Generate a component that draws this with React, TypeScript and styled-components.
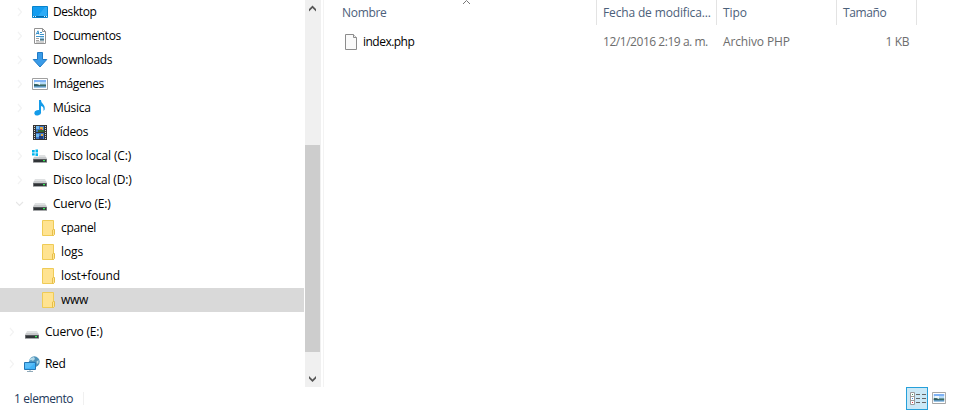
import React from "react";
import styled, { createGlobalStyle } from "styled-components";

const GlobalStyle = createGlobalStyle`
  * { box-sizing: border-box; }
  body { margin: 0; background: #fff; overflow: hidden; }
`;

const Window = styled.div`
  width: 954px;
  height: 410px;
  display: flex;
  flex-direction: column;
  background: #fff;
  color: #000;
  font: 12px/24px "Open Sans", "Noto Sans", sans-serif;
  white-space: nowrap;
`;
const Body = styled.div`
  display: flex;
  height: 387px;
`;
const Tree = styled.nav`
  width: 304px;
`;
const TreeRow = styled.div<{ $indent: number; $selected?: boolean; $gap?: boolean }>`
  display: flex;
  align-items: center;
  height: 24px;
  margin-top: ${(p) => (p.$gap ? 8 : 0)}px;
  padding-left: ${(p) => p.$indent}px;
  background: ${(p) => (p.$selected ? "#d9d9d9" : "transparent")};
`;
const Expander = styled.span`
  display: flex;
  width: 16px;
  height: 16px;
`;
const IconBox = styled.span<{ $gap?: number }>`
  display: flex;
  width: 16px;
  height: 16px;
  margin-right: ${(p) => p.$gap ?? 5}px;
`;
const Label = styled.span<{ $track?: number }>`
  letter-spacing: ${(p) => p.$track ?? -0.3}px;
`;
const ScrollBar = styled.div`
  display: flex;
  flex-direction: column;
  width: 16px;
  margin-left: 1px;
  background: #f0f0f0;
`;
const ScrollSpace = styled.div<{ $height: number }>`
  height: ${(p) => p.$height}px;
  display: flex;
`;
const ScrollThumb = styled.div`
  width: 15px;
  height: 207px;
  background: #cdcdcd;
`;
const Files = styled.main`
  margin-left: 2px;
  flex: 1;
  border-left: 1px solid #f3f3f3;
`;
const HeaderRow = styled.div`
  display: flex;
  height: 25px;
  padding-left: 12px;
  color: #4c607a;
`;
const HeaderCell = styled.div<{ $width: number }>`
  display: grid;
  width: ${(p) => p.$width}px;
  padding-left: 6px;
  border-right: 1px solid #e3e3e3;
  line-height: 26px;
  > * { grid-area: 1 / 1; }
  > svg { margin-left: 120px; }
`;
const FileRow = styled.div`
  display: flex;
  height: 24px;
  margin-top: 5px;
  padding-left: 19px;
  color: #6d6d6d;
  align-items: center;
`;
const FileCell = styled.div<{ $width: number; $right?: boolean; $dark?: boolean }>`
  display: flex;
  align-items: center;
  width: ${(p) => p.$width}px;
  justify-content: ${(p) => (p.$right ? "flex-end" : "flex-start")};
  color: ${(p) => (p.$dark ? "#000" : "inherit")};
`;
const StatusBar = styled.footer`
  display: flex;
  height: 23px;
  padding: 0 8px 0 14px;
  color: #1e395b;
`;
const StatusText = styled.div`
  width: 70px;
  height: 13px;
  margin-top: 5px;
  line-height: 13px;
  border-right: 1px solid #f0f0f0;
`;
const ViewButtons = styled.div`
  display: flex;
  margin-left: auto;
  align-items: center;
  gap: 4px;
`;
const ThumbnailButton = styled.button`
  display: flex;
  width: 14px;
  height: 16px;
  margin-bottom: 2px;
  padding: 0;
  border: 0;
  background: none;
`;
const ViewButton = styled.button`
  display: flex;
  width: 22px;
  height: 23px;
  padding: 0;
  border: 1px solid #26a0da;
  background: #cbe8f6;
`;

type IconName = "desktop" | "document" | "download" | "picture" | "music" | "video" | "system" | "drive" | "folder" | "network" | "file";

const Picture = () => (
  <>
    <path fill="#fff" stroke="#a0a0a0" d="M.5 2.5h15v11H.5z" />
    <path fill="#7fb2f5" d="M2 4h12v2H2z" />
    <path fill="#b5daf8" d="M2 6h12v2H2z" />
    <path fill="#eef8fb" d="M3 6h5v2H3z" />
    <path fill="#3d6a66" d="M2 8h3l3 1h6v1H2z" />
    <path fill="#6f9a9d" d="M8 8h6v1H8z" />
    <path fill="#2c5a68" d="M2 9h5v1H2z" />
    <path fill="#5c94b8" d="M2 10h12v1H2z" />
    <path fill="#9cc4e4" d="M2 11h12v1H2z" />
  </>
);
const Drive = () => (
  <>
    <path fill="#dfe1e2" d="M3 7h10l2 4H1z" />
    <path fill="#c7c9cb" d="M2 9h12l1 2H1z" />
    <path fill="#6c6f72" d="M1 11h14v3.6H1z" />
    <path fill="#303437" d="M2 11.6h12V14H2z" />
    <path fill="#35ed56" d="M11 12h2v1.3h-2z" />
  </>
);

function Icon({ name }: { name: IconName }) {
  return (
    <svg width="16" height="16" viewBox="0 0 16 16" fill="none">
      {name === "desktop" && (
        <>
          <path fill="#149df0" stroke="#0783cc" d="M.5 2.5h15v11H.5z" />
          <path fill="#45bafc" d="M13 3h2v9H6z" opacity=".5" />
          <path fill="#0869a8" d="M1 12h14v1H1z" />
          <path stroke="#d4f2ff" d="M1 12.5h1M3 12.5h1M12 12.5h1M14 12.5h1" />
        </>
      )}
      {name === "document" && (
        <>
          <path fill="#fff" stroke="#929292" d="M2.5.5h8l3 3v12h-11z" />
          <path stroke="#929292" d="M10.5.5v3h3" />
          <path stroke="#2587c5" strokeWidth=".9" d="M4 6.5 6 2.8l1 3.7M5 5.5h2M8 4.5h2M8 6.5h4M4 8.5h8" />
          <path stroke="#8a8a8a" d="M4 10.5h3M4 12.5h3M4 14h8" strokeWidth=".8" />
          <path fill="#83bbe0" d="M8 9.5h4v3H8z" />
          <path fill="#54757d" d="M8 11h4v1.5H8z" />
        </>
      )}
      {name === "download" && <path fill="#399be8" stroke="#207bc6" d="M5.5.5h5v7h4.3L8 15 1.2 7.5h4.3z" />}
      {name === "picture" && <Picture />}
      {name === "music" && (
        <>
          <path fill="#149be9" d="M7 0h2c0 4 4.5 4.2 3.7 9.5L11.5 11c.5-3.7-.8-4.6-2.5-5v6.3H7z" />
          <ellipse cx="5.7" cy="12.8" rx="3.4" ry="2.6" transform="rotate(-20 5.7 12.8)" fill="#149be9" />
        </>
      )}
      {name === "video" && (
        <>
          <path fill="#343434" d="M1 1h14v15H1z" />
          <path fill="#3f78c7" d="M4 2h8v6H4zM4 9h8v6H4z" />
          <path fill="#70b9ee" d="M4 2h3v3H4zM4 10h3v3H4z" />
          <path fill="#e2a942" d="M8 3h3v3H8zM9 10h2v2H9z" />
          <path fill="#b43e43" d="M8 5h2v2H8z" />
          <path fill="#33672f" d="M6 6h6v2H6z" />
          <path fill="#233e7b" d="M7 12h4v3H7z" />
          <path stroke="#d6d6d6" strokeDasharray="1 1" d="M2.5 2v13M13.5 2v13" />
        </>
      )}
      {name === "drive" && <Drive />}
      {name === "system" && (
        <>
          <Drive />
          <path fill="#fff" d="M0 1h7v7.5H0z" />
          <path fill="#00b5ee" d="M0 2h2.7v2.4H0zM3.5 1.6H6v2.8H3.5zM0 5.2h2.7v2.3H0zM3.5 5.2H6V8H3.5z" />
        </>
      )}
      {name === "folder" && (
        <>
          <path fill="#ffe391" stroke="#efcb56" d="M2.5.5h11v15h-11z" />
          <path fill="#ffe694" stroke="#e6be4a" d="M12.5 15.5V10l1-.5h1v5l-1 1z" />
        </>
      )}
      {name === "file" && (
        <>
          <path fill="#fafafa" stroke="#8c8c8c" d="M2.5.5h8l3 3v12h-11z" />
          <path fill="#eee" stroke="#8c8c8c" d="M10.5.5v3h3" />
        </>
      )}
      {name === "network" && (
        <>
          <circle cx="10.3" cy="5.7" r="5.4" fill="#4f93ba" />
          <path fill="#b4d9e8" d="M7 2l3-1 1 2-2 2-2-1-2 1V3.500zM12.500 5.500l2-1.500v3l-1.500 1z" />
          <path fill="#40b3f8" stroke="#2476b4" d="M.5 6.5h11v7H.5z" />
          <path fill="#80cffb" d="M1 7h10L5 12H1z" opacity=".4" />
          <path stroke="#8fa9b8" d="M6 14v1M3 15.500h6" />
        </>
      )}
    </svg>
  );
}

const entries: { name: string; icon: IconName; indent?: number; track?: number; open?: boolean; leaf?: boolean; selected?: boolean; gap?: boolean }[] = [
  { name: "Desktop", icon: "desktop", track: -0.42 },
  { name: "Documentos", icon: "document", track: -0.36 },
  { name: "Downloads", icon: "download", track: -0.4 },
  { name: "Imágenes", icon: "picture", track: -0.42 },
  { name: "Música", icon: "music" },
  { name: "Vídeos", icon: "video", track: -0.36 },
  { name: "Disco local (C:)", icon: "system", track: -0.12 },
  { name: "Disco local (D:)", icon: "drive", track: -0.17 },
  { name: "Cuervo (E:)", icon: "drive", open: true, track: -0.2 },
  { name: "cpanel", icon: "folder", indent: 24, leaf: true },
  { name: "logs", icon: "folder", indent: 24, leaf: true, track: -0.1 },
  { name: "lost+found", icon: "folder", indent: 24, leaf: true, track: -0.15 },
  { name: "www", icon: "folder", indent: 24, leaf: true, selected: true },
  { name: "Cuervo (E:)", icon: "drive", indent: 8, gap: true, track: -0.2 },
  { name: "Red", icon: "network", indent: 8, gap: true },
];

export default function App() {
  return (
    <>
      <GlobalStyle />
      <Window>
        <Body>
          <Tree>
            {entries.map((e, i) => (
              <TreeRow key={i} $indent={e.indent ?? 16} $selected={e.selected} $gap={e.gap}>
                <Expander>
                  {!e.leaf && (
                    <svg width="16" height="16" fill="none" stroke={e.open ? "#e6e6e6" : "#f3f3f3"} strokeWidth="1.2">
                      <path d={e.open ? "M0 6l3.5 3.5L7 6" : "M2 4l3.5 4L2 12"} />
                    </svg>
                  )}
                </Expander>
                <IconBox><Icon name={e.icon} /></IconBox>
                <Label $track={e.track}>{e.name}</Label>
              </TreeRow>
            ))}
          </Tree>
          <ScrollBar>
            <ScrollSpace $height={145}>
              <svg width="16" height="17"><path d="M4 11.5V9l3.5-3.5L11 9v2.5L7.5 8z" fill="#555" /></svg>
            </ScrollSpace>
            <ScrollThumb />
            <ScrollSpace $height={35}>
              <svg width="16" height="35"><path d="M4 24v2.5L7.5 30l3.5-3.5V24l-3.500 3.500z" fill="#555" /></svg>
            </ScrollSpace>
          </ScrollBar>
          <Files>
            <HeaderRow>
              <HeaderCell $width={261}>
                <Label>Nombre</Label>
                <svg width="9" height="5" fill="none" stroke="#777"><path d="M1 4l3.5-3.5L8 4" /></svg>
              </HeaderCell>
              <HeaderCell $width={120}><Label $track={-0.15}>Fecha de modifica...</Label></HeaderCell>
              <HeaderCell $width={120}><Label $track={-0.1}>Tipo</Label></HeaderCell>
              <HeaderCell $width={80}><Label $track={-0.4}>Tamaño</Label></HeaderCell>
            </HeaderRow>
            <FileRow>
              <FileCell $width={260} $dark>
                <IconBox $gap={4}><Icon name="file" /></IconBox>
                <Label $track={-0.52}>index.php</Label>
              </FileCell>
              <FileCell $width={120}><Label $track={-0.46}>12/1/2016 2:19 a. m.</Label></FileCell>
              <FileCell $width={120}><Label $track={-0.13}>Archivo PHP</Label></FileCell>
              <FileCell $width={66} $right><Label $track={-0.4}>1 KB</Label></FileCell>
            </FileRow>
          </Files>
        </Body>
        <StatusBar>
          <StatusText><Label $track={-0.4}>1 elemento</Label></StatusText>
          <ViewButtons>
            <ViewButton aria-label="Detalles">
              <svg width="20" height="21" fill="none">
                <path fill="#fff" stroke="#9b9b9b" d="M3.5 4.5h4v12h-4zM3.5 8.5h4M3.5 12.5h4" />
                <path stroke="#666" d="M9 6.5h4M15 6.5h4M9 10.5h4M15 10.5h4M9 14.5h4M15 14.5h4" />
                <path fill="#459166" d="M5 6h1v1H5z" /><path fill="#438ae0" d="M5 10h1v1H5z" /><path fill="#dc3144" d="M5 14h1v1H5z" />
              </svg>
            </ViewButton>
            <ThumbnailButton aria-label="Miniaturas">
              <svg width="14" height="16" viewBox="0 0 16 16" preserveAspectRatio="none"><Picture /></svg>
            </ThumbnailButton>
          </ViewButtons>
        </StatusBar>
      </Window>
    </>
  );
}
